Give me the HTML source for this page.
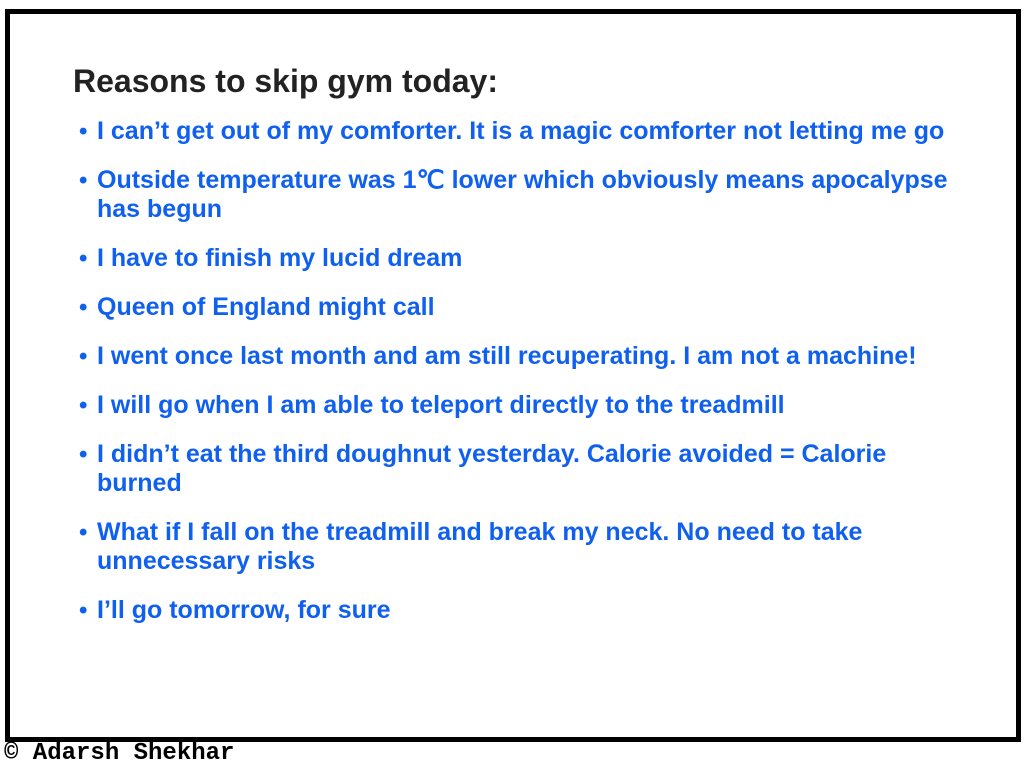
<!DOCTYPE html>
<html><head><meta charset="utf-8"><style>
html,body{margin:0;padding:0;width:1025px;height:774px;background:#fff;overflow:hidden;position:relative}
.frame{position:absolute;left:5px;top:9px;width:1006px;height:723px;border:5.5px solid #000}
h1{position:absolute;left:73px;top:63px;margin:0;font:bold 32px "Liberation Sans",sans-serif;color:#222}
ul{position:absolute;left:79px;top:117px;margin:0;padding:0;list-style:none;width:880px}
li{position:relative;padding-left:18px;font:bold 25px/29px "Liberation Sans",sans-serif;color:#1060f0;margin-bottom:20px}
li:before{content:"•";position:absolute;left:0;top:0;font-size:24px}
.foot{position:absolute;left:4px;top:740px;font:bold 24px "Liberation Mono",monospace;color:#000}
</style></head><body>
<div class="frame"></div>
<h1>Reasons to skip gym today:</h1>
<ul>
<li>I can’t get out of my comforter. It is a magic comforter not letting me go</li>
<li>Outside temperature was 1℃ lower which obviously means apocalypse has begun</li>
<li>I have to finish my lucid dream</li>
<li>Queen of England might call</li>
<li>I went once last month and am still recuperating. I am not a machine!</li>
<li>I will go when I am able to teleport directly to the treadmill</li>
<li>I didn’t eat the third doughnut yesterday. Calorie avoided = Calorie burned</li>
<li>What if I fall on the treadmill and break my neck. No need to take unnecessary risks</li>
<li>I’ll go tomorrow, for sure</li>
</ul>
<div class="foot">© Adarsh Shekhar</div>
</body></html>
